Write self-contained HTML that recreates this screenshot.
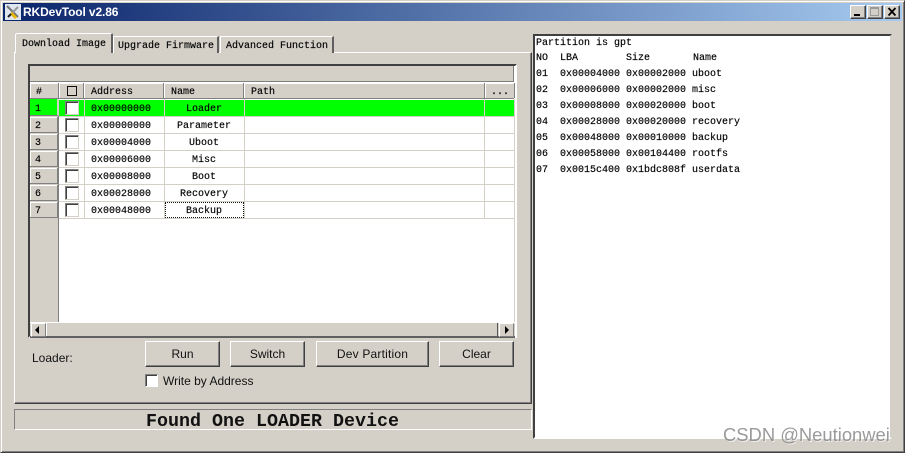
<!DOCTYPE html>
<html><head><meta charset="utf-8"><style>
html,body{margin:0;padding:0;width:905px;height:453px;overflow:hidden;background:#d4d0c8}
div,span{position:absolute;box-sizing:border-box;white-space:pre}
.m{font:10px/12px "Liberation Mono","DejaVu Sans Mono",monospace;color:#000;margin-top:2px;-webkit-text-stroke:.15px #000}
.c{text-align:center}
.btn{background:#d4d0c8;border:1px solid;border-color:#fff #404040 #404040 #fff;box-shadow:inset -1px -1px 0 #808080;font:12px/24px "Liberation Sans",sans-serif;color:#111;text-align:center}
.cb{width:14px;height:14px;left:65px;background:#fff;border:1px solid;border-color:#808080 #d4d0c8 #d4d0c8 #808080;box-shadow:inset 1px 1px 0 #404040}
.rn{left:30px;width:28px;height:16px;background:#d4d0c8;border-right:1px solid #808080;border-bottom:1px solid #808080;box-shadow:inset 1px 1px 0 #fff}
.hl{left:59px;width:456px;height:1px;background:#d4d0c8}
.vl{top:99px;height:120px;width:1px;background:#d4d0c8}
.h{top:83px;height:15px;background:#d4d0c8;border-right:1px solid #808080;box-shadow:inset 1px 1px 0 #fff}
.tab{background:#d4d0c8;border-top:1px solid #fff;border-left:1px solid #fff;border-right:2px solid #606060}
</style></head><body>
<div style="left:0;top:0;width:905px;height:453px;border:1px solid;border-color:#d4d0c8 #404040 #404040 #d4d0c8;box-shadow:inset 1px 1px 0 #fff,inset -1px -1px 0 #808080"></div>
<div style="left:3px;top:3px;width:899px;height:18px;background:linear-gradient(90deg,#0a246a,#a6caf0)"></div>
<svg style="position:absolute;left:5px;top:4px" width="16" height="16" viewBox="0 0 16 16"><rect width="16" height="16" fill="#dfe6f0"/><path d="M2 2L13 13" stroke="#777" stroke-width="2"/><path d="M13 3L6 10" stroke="#999" stroke-width="2"/><path d="M6 9L11 14" stroke="#e8b800" stroke-width="3"/><path d="M3 13L6 10" stroke="#222" stroke-width="2"/></svg>
<div style="left:23px;top:4px;font:bold 12px/16px 'Liberation Sans',sans-serif;color:#fff;letter-spacing:-.12px">RKDevTool v2.86</div>
<div class="btn" style="left:850px;top:5px;width:16px;height:14px"></div><div style="left:854px;top:14px;width:6px;height:2px;background:#000"></div>
<div class="btn" style="left:867px;top:5px;width:16px;height:14px"></div><div style="left:870px;top:7px;width:9px;height:9px;border:1px solid #9a9a9a;border-top-width:2px"></div>
<div class="btn" style="left:884px;top:5px;width:16px;height:14px"></div>
<svg style="position:absolute;left:887px;top:7px" width="10" height="10"><path d="M1.5 1L8.5 8.500M8.500 1L1.500 8.500" stroke="#000" stroke-width="1.800"/></svg>

<!-- tab page -->
<div style="left:14px;top:52px;width:518px;height:352px;border:1px solid;border-color:#fff #404040 #404040 #fff;box-shadow:inset -1px -1px 0 #808080"></div>
<div class="tab" style="left:15px;top:33px;width:98px;height:20px;border-radius:2px 2px 0 0"></div>
<div class="tab" style="left:113px;top:36px;width:106px;height:17px"></div>
<div class="tab" style="left:220px;top:36px;width:114px;height:17px"></div>
<div class="m" style="left:22px;top:37px">Download Image</div>
<div class="m" style="left:118px;top:39px">Upgrade Firmware</div>
<div class="m" style="left:226px;top:39px">Advanced Function</div>

<!-- grid -->
<div style="left:28px;top:64px;width:489px;height:274px;background:#fff;border:2px solid;border-color:#404040 #fff #fff #404040"></div>
<div style="left:30px;top:66px;width:484px;height:16px;background:#d4d0c8;border-right:1px solid #808080;border-bottom:1px solid #808080"></div>
<div style="left:30px;top:82px;width:484px;height:1px;background:#fff"></div>
<div class="h" style="left:30px;width:29px"></div>
<div class="h" style="left:59px;width:25px"></div>
<div class="h" style="left:84px;width:80px"></div>
<div class="h" style="left:164px;width:80px"></div>
<div class="h" style="left:244px;width:241px"></div>
<div class="h" style="left:485px;width:30px;border-right:1px solid #808080"></div>
<div style="left:30px;top:98px;width:484px;height:1px;background:#808080"></div>
<div class="m" style="left:36px;top:85px">#</div>
<div style="left:67px;top:86px;width:10px;height:10px;border:1px solid #111"></div>
<div class="m" style="left:91px;top:85px">Address</div>
<div class="m" style="left:171px;top:85px">Name</div>
<div class="m" style="left:251px;top:85px">Path</div>
<div class="m" style="left:491px;top:85px">...</div>

<div style="left:30px;top:99px;width:29px;height:223px;background:#d4d0c8;border-right:1px solid #808080"></div>
<div class="rn" style="top:99px;background:#0f0;height:17px;width:29px;box-shadow:none;border-right:2px solid #d4d0c8"></div>
<div style="left:59px;top:100px;width:455px;height:16px;background:#0f0"></div>
<div class="rn" style="top:117px"></div><div class="rn" style="top:134px"></div><div class="rn" style="top:151px"></div><div class="rn" style="top:168px"></div><div class="rn" style="top:185px"></div><div class="rn" style="top:202px"></div>
<div class="hl" style="top:116px"></div><div class="hl" style="top:133px"></div><div class="hl" style="top:150px"></div><div class="hl" style="top:167px"></div><div class="hl" style="top:184px"></div><div class="hl" style="top:201px"></div><div class="hl" style="top:218px"></div>
<div class="vl" style="left:84px"></div><div class="vl" style="left:164px"></div><div class="vl" style="left:244px"></div><div class="vl" style="left:484px"></div>
<div class="vl" style="left:514px;top:99px;height:223px;background:#d4d0c8"></div>

<div class="cb" style="top:101px"></div><div class="cb" style="top:118px"></div><div class="cb" style="top:135px"></div><div class="cb" style="top:152px"></div><div class="cb" style="top:169px"></div><div class="cb" style="top:186px"></div><div class="cb" style="top:203px"></div>

<div class="m" style="left:35px;top:102px">1</div><div class="m" style="left:35px;top:119px">2</div><div class="m" style="left:35px;top:136px">3</div><div class="m" style="left:35px;top:153px">4</div><div class="m" style="left:35px;top:170px">5</div><div class="m" style="left:35px;top:187px">6</div><div class="m" style="left:35px;top:204px">7</div>
<div class="m" style="left:91px;top:102px">0x00000000</div><div class="m" style="left:91px;top:119px">0x00000000</div><div class="m" style="left:91px;top:136px">0x00004000</div><div class="m" style="left:91px;top:153px">0x00006000</div><div class="m" style="left:91px;top:170px">0x00008000</div><div class="m" style="left:91px;top:187px">0x00028000</div><div class="m" style="left:91px;top:204px">0x00048000</div>
<div class="m c" style="left:164px;width:80px;top:102px">Loader</div><div class="m c" style="left:164px;width:80px;top:119px">Parameter</div><div class="m c" style="left:164px;width:80px;top:136px">Uboot</div><div class="m c" style="left:164px;width:80px;top:153px">Misc</div><div class="m c" style="left:164px;width:80px;top:170px">Boot</div><div class="m c" style="left:164px;width:80px;top:187px">Recovery</div><div class="m c" style="left:164px;width:80px;top:204px">Backup</div>
<div style="left:165px;top:202px;width:79px;height:16px;border:1px dotted #111"></div>

<!-- scrollbar -->
<div style="left:30px;top:322px;width:485px;height:16px;background:#d4d0c8;border-top:1px solid #fff;border-bottom:2px solid #606060"></div>
<div style="left:31px;top:323px;width:15px;height:14px;border:1px solid;border-color:#fff #808080 #808080 #fff;background:#d4d0c8"></div>
<div style="left:46px;top:323px;width:1px;height:13px;background:#fff"></div>
<div style="left:497px;top:323px;width:1px;height:13px;background:#555"></div>
<div style="left:499px;top:323px;width:15px;height:14px;border:1px solid;border-color:#fff #808080 #808080 #fff;background:#d4d0c8"></div>
<svg style="position:absolute;left:35px;top:325px" width="6" height="10"><path d="M4 1V9L0 5Z" fill="#000"/></svg>
<svg style="position:absolute;left:505px;top:325px" width="6" height="10"><path d="M0 1V9L4 5Z" fill="#000"/></svg>

<!-- controls -->
<div style="left:32px;top:351px;font:12px/14px 'Liberation Sans',sans-serif;color:#111">Loader:</div>
<div class="btn" style="left:145px;top:341px;width:75px;height:26px">Run</div>
<div class="btn" style="left:230px;top:341px;width:75px;height:26px">Switch</div>
<div class="btn" style="left:316px;top:341px;width:113px;height:26px;letter-spacing:.2px">Dev Partition</div>
<div class="btn" style="left:439px;top:341px;width:75px;height:26px">Clear</div>
<div style="left:145px;top:374px;width:13px;height:13px;background:#fff;border:1px solid;border-color:#808080 #fff #fff #808080;box-shadow:inset 1px 1px 0 #404040"></div>
<div style="left:163px;top:374px;font:12px/14px 'Liberation Sans',sans-serif;color:#111">Write by Address</div>

<!-- status -->
<div style="left:14px;top:409px;width:518px;height:21px;border:1px solid;border-color:#808080 #fff #fff #808080"></div>
<div style="left:146px;top:412px;font:bold 18.330px/20px 'Liberation Mono',monospace;color:#111">Found One LOADER Device</div>

<!-- log -->
<div style="left:533px;top:34px;width:359px;height:405px;background:#fff;border:2px solid;border-color:#404040 #d4d0c8 #fff #404040"></div>
<div class="m" style="left:536px;top:36px">Partition is gpt</div>
<div class="m" style="left:536px;top:51px">NO</div><div class="m" style="left:560px;top:51px">LBA</div><div class="m" style="left:626px;top:51px">Size</div><div class="m" style="left:693px;top:51px">Name</div>
<div class="m" style="left:536px;top:67px">01  0x00004000 0x00002000 uboot</div>
<div class="m" style="left:536px;top:83px">02  0x00006000 0x00002000 misc</div>
<div class="m" style="left:536px;top:99px">03  0x00008000 0x00020000 boot</div>
<div class="m" style="left:536px;top:115px">04  0x00028000 0x00020000 recovery</div>
<div class="m" style="left:536px;top:131px">05  0x00048000 0x00010000 backup</div>
<div class="m" style="left:536px;top:147px">06  0x00058000 0x00104400 rootfs</div>
<div class="m" style="left:536px;top:163px">07  0x0015c400 0x1bdc808f userdata</div>

<div style="left:723px;top:426px;font:18.400px/18px 'Liberation Sans',sans-serif;color:rgba(120,120,120,.75);text-shadow:1px 1px 0 rgba(255,255,255,.6)">CSDN @Neutionwei</div>
</body></html>
